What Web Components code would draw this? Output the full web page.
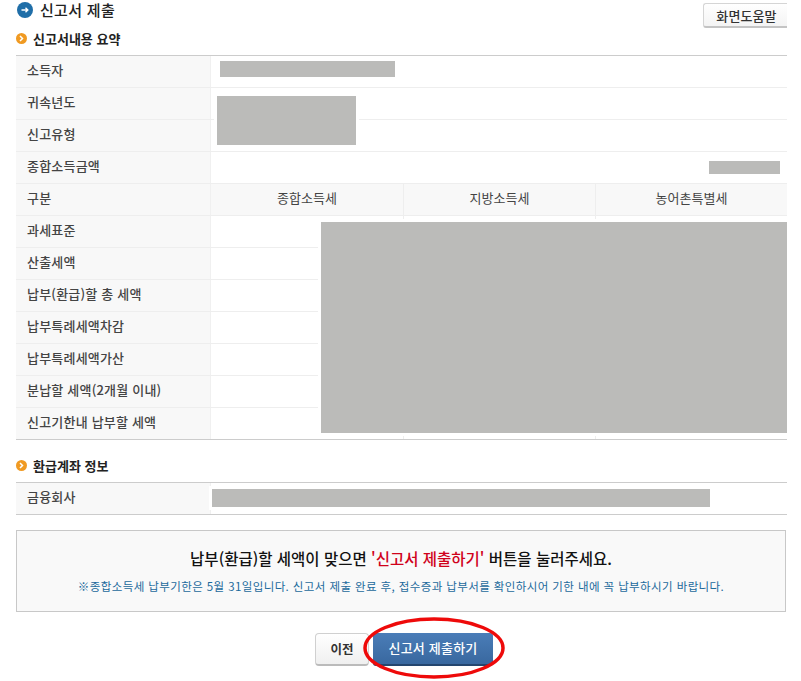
<!DOCTYPE html>
<html lang="ko">
<head>
<meta charset="utf-8">
<title>신고서 제출</title>
<style>
  html, body { margin: 0; background: #fff; }
  body { font-family: "Noto Sans CJK KR", "Liberation Sans", sans-serif; color: #333; }
</style>
</head>
<body>
<report-page>
  <page-title slot="title">신고서 제출</page-title>
  <help-button slot="title">화면도움말</help-button>

  <section-head>신고서내용 요약</section-head>
  <tax-table>
    <tax-row>소득자</tax-row>
    <tax-row>귀속년도</tax-row>
    <tax-row>신고유형</tax-row>
    <tax-row>종합소득금액</tax-row>
    <tax-row shaded cols="3">구분
      <span slot="c1">종합소득세</span><span slot="c2">지방소득세</span><span slot="c3">농어촌특별세</span>
    </tax-row>
    <tax-row cols="3">과세표준</tax-row>
    <tax-row cols="3">산출세액</tax-row>
    <tax-row cols="3">납부(환급)할 총 세액</tax-row>
    <tax-row cols="3">납부특례세액차감</tax-row>
    <tax-row cols="3">납부특례세액가산</tax-row>
    <tax-row cols="3">분납할 세액(2개월 이내)</tax-row>
    <tax-row cols="3" last>신고기한내 납부할 세액</tax-row>
  </tax-table>

  <section-head class="second">환급계좌 정보</section-head>
  <tax-table>
    <tax-row last>금융회사</tax-row>
  </tax-table>

  <notice-box>
    납부(환급)할 세액이 맞으면 <span style="color:#d0021b">'신고서 제출하기'</span> 버튼을 눌러주세요.
    <span slot="note">※종합소득세 납부기한은 5월 31일입니다. 신고서 제출 완료 후, 접수증과 납부서를 확인하시어 기한 내에 꼭 납부하시기 바랍니다.</span>
  </notice-box>

  <action-bar>
    <page-button>이전</page-button>
    <page-button primary>신고서 제출하기</page-button>
  </action-bar>

  <!-- masked values and the hand drawn mark, these sit on top of the page -->
  <mask-box x="220" y="61" w="175" h="16"></mask-box>
  <mask-box x="217" y="96" w="139" h="49"></mask-box>
  <mask-box x="709" y="161" w="71" h="13"></mask-box>
  <mask-box x="321" y="222" w="466" h="211"></mask-box>
  <mask-box x="212" y="489" w="498" h="18"></mask-box>
  <red-circle></red-circle>
</report-page>

<script>
function make(html) {
  const t = document.createElement('template');
  t.innerHTML = html;
  return t;
}

class Base extends HTMLElement {
  constructor() {
    super();
    this.attachShadow({ mode: 'open' });
    this.shadowRoot.appendChild(this.constructor.tpl.content.cloneNode(true));
  }
}

class ReportPage extends Base {}
ReportPage.tpl = make(`
<style>
  :host { display: block; position: relative; width: 801px; height: 681px; box-sizing: border-box; padding: 3px 14px 0 16px; overflow: hidden; }
  .top { display: flex; justify-content: space-between; align-items: flex-start; height: 25px; }
</style>
<div class="top"><slot name="title"></slot></div>
<slot></slot>`);

class PageTitle extends Base {}
PageTitle.tpl = make(`
<style>
  :host { display: flex; align-items: center; gap: 7px; margin-top: -3px; height: 20px; padding-left: 1px; font-size: 15px; font-weight: 500; color: #222; letter-spacing: 0.3px; }
  svg { display: block; }
  span { margin-top: -2px; }
</style>
<svg width="16" height="16" viewBox="0 0 16 16">
  <circle cx="8" cy="8" r="8" fill="#1f6ea8"/>
  <path d="M4.5 8h6M8.5 5.8 10.8 8 8.5 10.2" fill="none" stroke="#fff" stroke-width="1.4"/>
</svg>
<span><slot></slot></span>`);

class HelpButton extends Base {}
HelpButton.tpl = make(`
<style>
  :host { display: flex; align-items: center; justify-content: center; width: 84px; height: 25px; box-sizing: border-box; padding-left: 2px; border: 1px solid #d5d5d5; border-right: 0; border-bottom: 2px solid #c4c4c4; border-radius: 3px 0 0 3px; background: linear-gradient(#fff, #f4f4f4); font-size: 13px; font-weight: 500; color: #333; letter-spacing: 0.1px; }
</style>
<slot></slot>`);

class SectionHead extends Base {}
SectionHead.tpl = make(`
<style>
  :host { display: flex; align-items: center; gap: 6px; height: 27px; padding-bottom: 6px; box-sizing: border-box; font-size: 13px; font-weight: 700; color: #222; }
  :host(.second) { height: 42px; padding: 9px 0 0; }
  svg { display: block; }
</style>
<svg width="11" height="11" viewBox="0 0 11 11">
  <circle cx="5.5" cy="5.5" r="5.5" fill="#f09a22"/>
  <path d="M4 3l2.5 2.5L4 8" fill="none" stroke="#fff" stroke-width="1.5"/>
</svg>
<span><slot></slot></span>`);

class TaxTable extends Base {}
TaxTable.tpl = make(`
<style>
  :host { display: block; width: 771px; border-top: 1px solid #ccc; }
</style>
<slot></slot>`);

class TaxRow extends Base {
  connectedCallback() {
    if (this.getAttribute('cols')) this.shadowRoot.querySelector('.cells').classList.add('three');
  }
}
TaxRow.tpl = make(`
<style>
  :host { display: grid; grid-template-columns: 195px 1fr; height: 32px; box-sizing: border-box; border-bottom: 1px solid #eee; font-size: 13px; color: #444; }
  :host([last]) { border-bottom-color: #ccc; }
  .label { display: flex; align-items: center; padding: 0 0 5px 11px; background: #f8f8f8; border-right: 1px solid #f0f0f0; font-weight: 500; letter-spacing: 0.2px; white-space: nowrap; }
  .cells { display: block; }
  .cells.three { display: grid; grid-template-columns: 193px 192px 191px; }
  .cells > div { display: none; align-items: center; justify-content: center; padding-bottom: 5px; border-right: 1px solid #eee; }
  .cells.three > div { display: flex; }
  .cells.three > div:last-child { border-right: 0; }
  :host([shaded]) .cells { background: #f8f8f8; }
</style>
<div class="label"><slot></slot></div>
<div class="cells">
  <div><slot name="c1"></slot></div>
  <div><slot name="c2"></slot></div>
  <div><slot name="c3"></slot></div>
</div>`);

class NoticeBox extends Base {}
NoticeBox.tpl = make(`
<style>
  :host { display: flex; flex-direction: column; align-items: center; width: 770px; height: 82px; box-sizing: border-box; margin-top: 15px; padding-top: 16px; gap: 9px; border: 1px solid #c8c8c8; background: #f9f9f9; font-size: 15.5px; font-weight: 500; color: #111; white-space: nowrap; }
  .note { font-size: 11.5px; font-weight: 400; color: #1c6a9c; letter-spacing: 0.4px; }
</style>
<div><slot></slot></div>
<div class="note"><slot name="note"></slot></div>`);

class ActionBar extends Base {}
ActionBar.tpl = make(`
<style>
  :host { display: flex; justify-content: center; gap: 4px; margin: 21px 0 0 6px; width: 771px; padding-right: 7px; box-sizing: border-box; }
  ::slotted(*) { flex: none; }
</style>
<slot></slot>`);

class PageButton extends Base {}
PageButton.tpl = make(`
<style>
  :host { display: flex; align-items: center; justify-content: center; height: 33px; min-width: 54px; box-sizing: border-box; padding-bottom: 2px; border: 1px solid #d0d0d0; border-bottom: 2px solid #bbb; border-radius: 4px; background: linear-gradient(#fff, #f0f0f0); font-size: 12.5px; font-weight: 700; color: #333; }
  :host([primary]) { width: 120px; border: 0; border-bottom: 2px solid #24466f; border-radius: 3px; background: linear-gradient(#4a7db8, #39689f); color: #fff; font-size: 13px; font-weight: 500; letter-spacing: 0.2px; }
</style>
<slot></slot>`);

class MaskBox extends Base {
  connectedCallback() {
    const s = this.style;
    s.left = this.getAttribute('x') + 'px';
    s.top = this.getAttribute('y') + 'px';
    s.width = this.getAttribute('w') + 'px';
    s.height = this.getAttribute('h') + 'px';
  }
}
MaskBox.tpl = make(`
<style>
  :host { display: block; position: absolute; background: #bbbbb9; outline: 3px solid #fff; }
</style>`);

class RedCircle extends Base {}
RedCircle.tpl = make(`
<style>
  :host { display: block; position: absolute; left: 362px; top: 616px; width: 144px; height: 64px; pointer-events: none; }
  svg { display: block; }
</style>
<svg width="144" height="64" viewBox="0 0 144 64">
  <ellipse cx="72" cy="32" rx="69" ry="29" fill="none" stroke="#ee0a0a" stroke-width="3.5"/>
</svg>`);

customElements.define('report-page', ReportPage);
customElements.define('page-title', PageTitle);
customElements.define('help-button', HelpButton);
customElements.define('section-head', SectionHead);
customElements.define('tax-table', TaxTable);
customElements.define('tax-row', TaxRow);
customElements.define('notice-box', NoticeBox);
customElements.define('action-bar', ActionBar);
customElements.define('page-button', PageButton);
customElements.define('mask-box', MaskBox);
customElements.define('red-circle', RedCircle);
</script>
</body>
</html>
